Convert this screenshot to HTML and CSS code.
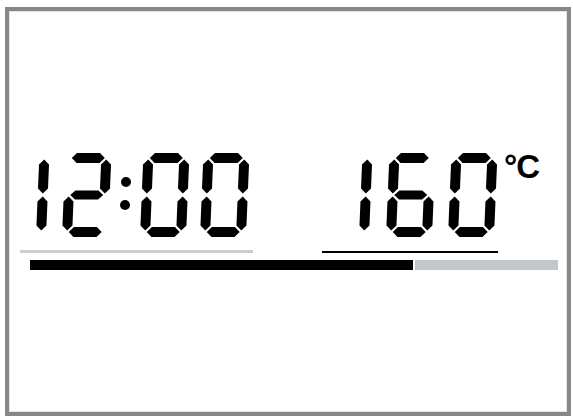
FILE: index.html
```html
<!DOCTYPE html>
<html lang="en">
<head>
<meta charset="utf-8">
<title>Oven display</title>
<link rel="stylesheet" href="styles.css">
</head>
<body>
<svg class="defs" aria-hidden="true">
  <defs>
    <polygon id="sa" points="6.5,5 11.5,0 34.5,0 39.5,5 34.5,10 11.5,10"/>
    <polygon id="sg" points="6.5,42 11.5,37.5 34.5,37.5 39.5,42 34.5,46.5 11.5,46.5"/>
    <polygon id="sd" points="6.5,79 11.5,74 34.5,74 39.5,79 34.5,84 11.5,84"/>
    <polygon id="sf" points="5,6.5 10,11.5 10,35.5 5,40.5 0,35.5 0,11.5"/>
    <polygon id="sb" points="41,6.5 46,11.5 46,35.5 41,40.5 36,35.5 36,11.5"/>
    <polygon id="se" points="5,43.5 10,48.5 10,72.5 5,77.5 0,72.5 0,48.5"/>
    <polygon id="sc" points="41,43.5 46,48.5 46,72.5 41,77.5 36,72.5 36,48.5"/>
    <g id="d0" transform="translate(3.5 0) skewX(-2.4)"><use href="#sa"/><use href="#sb"/><use href="#sc"/><use href="#sd"/><use href="#se"/><use href="#sf"/></g>
    <g id="d1" transform="translate(3.5 0) skewX(-2.4)"><use href="#sb"/><use href="#sc"/></g>
    <g id="d2" transform="translate(3.5 0) skewX(-2.4)"><use href="#sa"/><use href="#sb"/><use href="#sg"/><use href="#se"/><use href="#sd"/></g>
    <g id="d6" transform="translate(3.5 0) skewX(-2.4)"><use href="#sa"/><use href="#sf"/><use href="#sg"/><use href="#se"/><use href="#sd"/><use href="#sc"/></g>
  </defs>
</svg>
<div class="frame">
  <div class="readouts">
    <div class="clock">
      <div class="digits" aria-label="12:00">
        <svg class="seg seg-one" viewBox="36 0 14 84"><use href="#d1"/></svg>
        <svg class="seg" viewBox="0 0 50 84"><use href="#d2"/></svg>
        <div class="colon"><span class="dot"></span><span class="dot"></span></div>
        <svg class="seg" viewBox="0 0 50 84"><use href="#d0"/></svg>
        <svg class="seg" viewBox="0 0 50 84"><use href="#d0"/></svg>
      </div>
      <div class="rule rule-light"></div>
    </div>
    <div class="temp">
      <div class="temp-main">
        <div class="digits" aria-label="160">
          <svg class="seg seg-one" viewBox="36 0 14 84"><use href="#d1"/></svg>
          <svg class="seg" viewBox="0 0 50 84"><use href="#d6"/></svg>
          <svg class="seg" viewBox="0 0 50 84"><use href="#d0"/></svg>
        </div>
        <div class="rule rule-dark"></div>
      </div>
      <span class="unit">°C</span>
    </div>
  </div>
  <div class="progress">
    <div class="fill" style="width: 383px"></div>
    <div class="rest"></div>
  </div>
</div>
</body>
</html>
```
FILE: styles.css
```css
html, body {
  margin: 0;
  padding: 0;
  background: #ffffff;
}

body {
  font-family: "Liberation Sans", Arial, sans-serif;
  color: #000000;
}

.defs {
  display: block;
  width: 0;
  height: 0;
  overflow: hidden;
}

.frame {
  box-sizing: border-box;
  width: 566px;
  height: 409px;
  margin: 7px 0 0 5px;
  border: 4px solid #878787;
  box-shadow: inset 0 0 0 1px #e4e4e4;
  padding: 142px 9px 0 11px;
}

.readouts {
  display: flex;
  align-items: flex-start;
  gap: 69px;
}

.clock {
  width: 233px;
}

.digits {
  display: flex;
  align-items: flex-start;
  height: 84px;
}

.seg {
  display: block;
  width: 50px;
  height: 84px;
  fill: #000000;
  flex: none;
}

.seg-one {
  width: 14px;
}

.clock .digits {
  padding-left: 16px;
  gap: 10px;
}

.clock .seg-one {
  margin-right: 2px;
}

.colon {
  display: flex;
  flex-direction: column;
  gap: 13px;
  width: 10px;
  padding-top: 24px;
  margin-left: -2px;
}

.dot {
  display: block;
  width: 10px;
  height: 10px;
  border-radius: 50%;
  background: #000000;
}

.dot:first-child {
  margin-left: 1px;
}

.rule {
  width: 100%;
}

.rule-light {
  margin-top: 13px;
  height: 3px;
  background: #cdcdcd;
}

.temp {
  display: flex;
  align-items: flex-start;
}

.temp-main {
  width: 176px;
}

.temp .digits {
  padding-left: 37px;
  gap: 12px;
}

.temp .seg-one {
  margin-right: 1px;
}

.rule-dark {
  margin-top: 14px;
  height: 2px;
  background: #000000;
}

.unit {
  margin-left: 6px;
  margin-top: -3px;
  font-size: 33px;
  line-height: 1;
  font-weight: bold;
  letter-spacing: -1px;
}

.progress {
  display: flex;
  gap: 2px;
  width: 528px;
  height: 10px;
  margin: 7px 0 0 10px;
}

.fill {
  background: #000000;
  flex: none;
}

.rest {
  flex: 1;
  background: #c3c7cb;
}
```
